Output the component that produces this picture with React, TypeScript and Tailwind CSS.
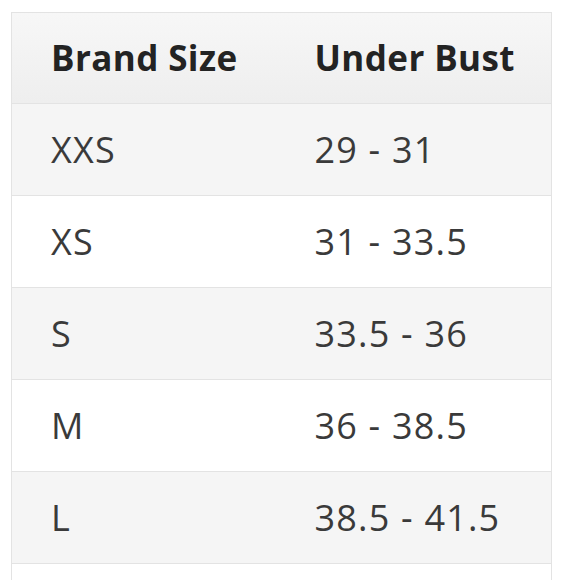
const rows = [
  ['XXS', '29 - 31'],
  ['XS', '31 - 33.5'],
  ['S', '33.5 - 36'],
  ['M', '36 - 38.5'],
  ['L', '38.5 - 41.5'],
  ['', ''],
]

export default function App() {
  return (
    <div className="w-[580px] h-[580px] overflow-hidden bg-white pl-[11px] pt-[12px] font-['Open_Sans',sans-serif]">
      <table className="w-[541px] border-collapse border border-[#e3e3e3]">
        <thead>
          <tr className="h-[91px] bg-gradient-to-b from-[#f7f7f7] to-[#eeeeee] border-b border-[#e3e3e3]">
            <th className="w-[265px] pl-[39px] text-left text-[35px] tracking-[0.4px] font-bold text-[#232323]">Brand Size</th>
            <th className="pl-[38px] text-left text-[35px] tracking-[0.4px] font-bold text-[#232323]">Under Bust</th>
          </tr>
        </thead>
        <tbody>
          {rows.map(([size, bust], i) => (
            <tr
              key={i}
              className={[
                'h-[92px] border-b border-[#e3e3e3]',
                i % 2 === 0 ? 'bg-[#f5f5f5]' : 'bg-white',
              ].join(' ')}
            >
              <td className="pl-[39px] text-[36px] tracking-[1.2px] text-[#3a3a3a]">{size}</td>
              <td className="pl-[38px] text-[36px] tracking-[1.2px] text-[#3a3a3a]">{bust}</td>
            </tr>
          ))}
        </tbody>
      </table>
    </div>
  )
}
